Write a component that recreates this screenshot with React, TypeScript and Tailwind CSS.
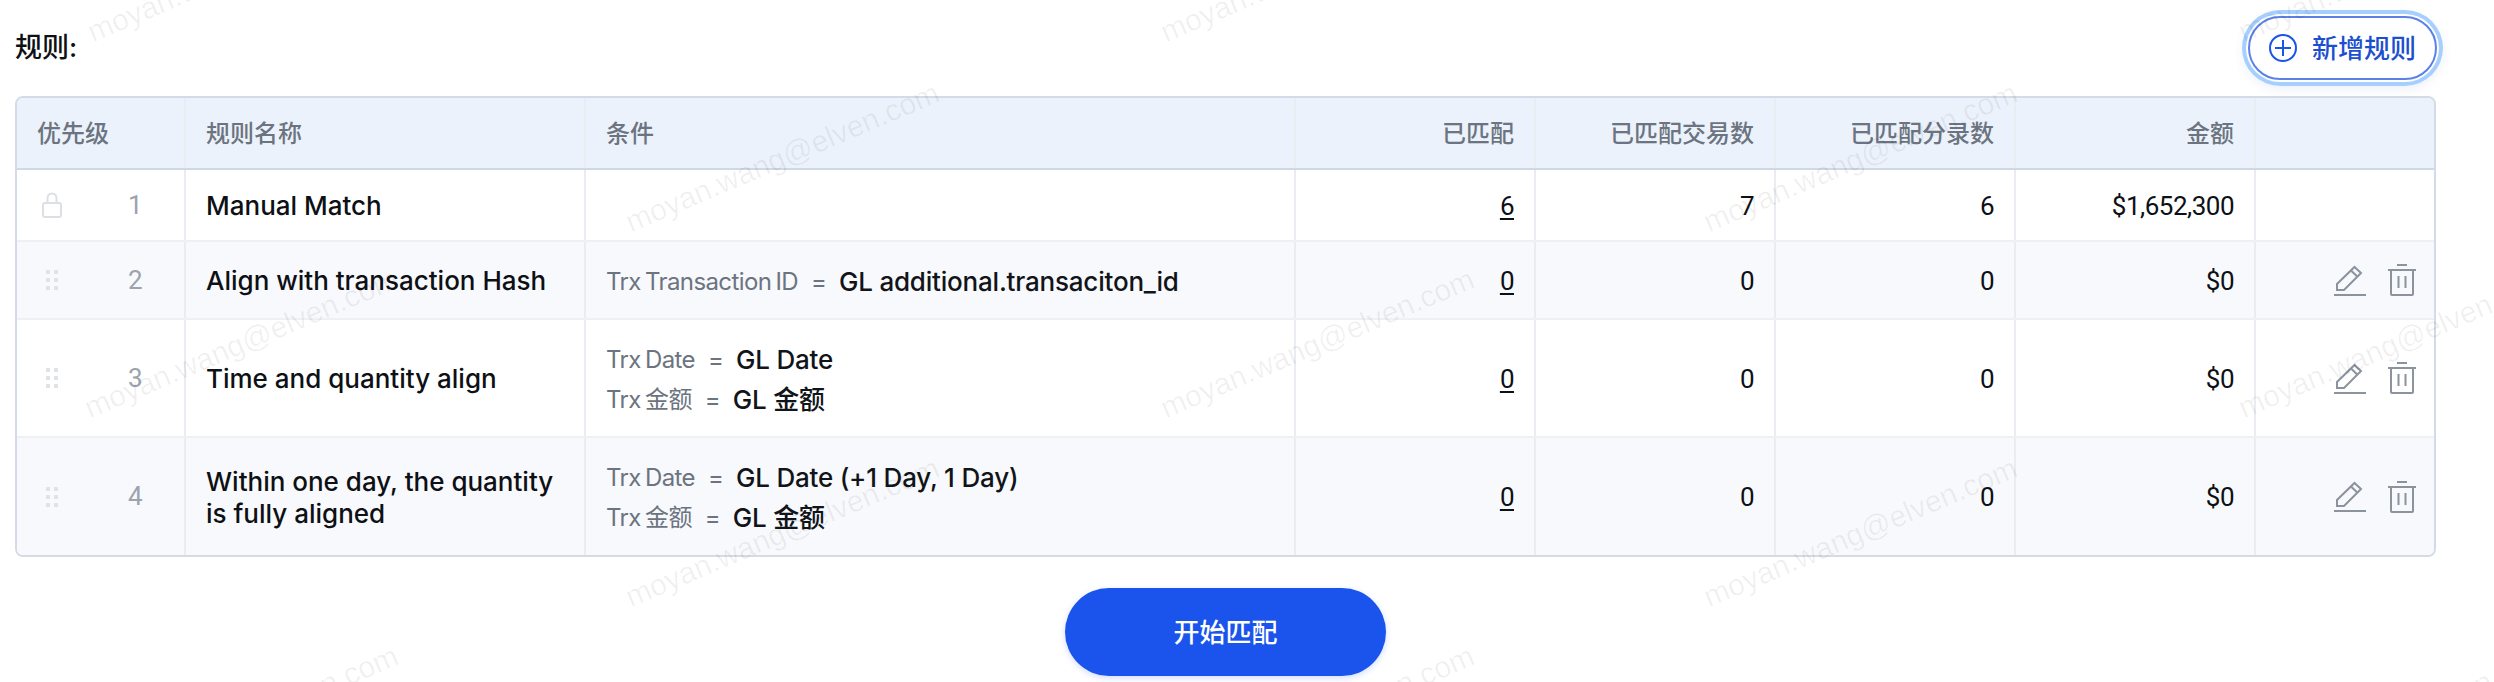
const rowGrid = "grid grid-cols-[169px_400px_710px_240px_240px_240px_240px_1fr]";
const cellLine = "border-r-2 border-[#e9ecf1] last:border-r-0";
const watermarks = [
  [87, 37], [1160, 37], [2238, 37],
  [625, 227], [1703, 227],
  [84, 413], [1160, 413], [2238, 413],
  [625, 602], [1703, 602],
  [84, 790], [1160, 790], [2238, 790],
];

function LockIcon() {
  return (
    <svg width="20" height="26" viewBox="0 0 20 26" fill="none" stroke="#dcdfe4" strokeWidth="2">
      <rect x="1" y="11" width="18" height="14" rx="2" />
      <path d="M5.500 11V6a4.500 4.500 0 0 1 9 0v5" />
    </svg>
  );
}

function DragIcon() {
  return (
    <svg width="12" height="20" viewBox="0 0 12 20" fill="#dfe2e7">
      <rect x="0" y="0" width="4" height="4" rx="0.5" />
      <rect x="8" y="0" width="4" height="4" rx="0.5" />
      <rect x="0" y="8" width="4" height="4" rx="0.5" />
      <rect x="8" y="8" width="4" height="4" rx="0.5" />
      <rect x="0" y="16" width="4" height="4" rx="0.5" />
      <rect x="8" y="16" width="4" height="4" rx="0.5" />
    </svg>
  );
}

function PencilIcon() {
  return (
    <svg width="32" height="31" viewBox="0 0 32 31" fill="none" stroke="#8a939e" strokeWidth="2">
      <path d="M3 25v-6L20.500 2 27 8 10 25z" />
      <path d="M17 5.500l6.500 6.300" />
      <path d="M0 30h32" />
    </svg>
  );
}

function TrashIcon() {
  return (
    <svg width="28" height="32" viewBox="0 0 28 32" fill="none" stroke="#8a939e" strokeWidth="2">
      <path d="M9 1h10" />
      <path d="M0 6h28" />
      <path d="M3 6v24a1 1 0 0 0 1 1h20a1 1 0 0 0 1-1V6" />
      <path d="M10.500 12v12M17.500 12v12" />
    </svg>
  );
}

function Condition({ label, value }: { label: string; value: string }) {
  return (
    <div className="flex items-center">
      <span className="text-[24px] font-normal tracking-[-0.6px] [word-spacing:-2px] text-[#6b7480]">{label}</span>
      <span className="ml-[13px] mr-[12px] text-[24px] font-normal text-[#6b7480]">=</span>
      <span className="text-[26px] font-medium tracking-[-0.2px] text-[#111418]">{value}</span>
    </div>
  );
}

function Num({ children, link }: { children: string; link?: boolean }) {
  return (
    <div className={`flex items-center justify-end border-r-2 border-[#e9ecf1] pr-5 pt-[2px] [font-family:Roboto,sans-serif] text-[26px] tracking-[-0.5px] text-[#0d1014] ${link ? "underline underline-offset-[3px]" : ""}`}>
      <span>{children}</span>
    </div>
  );
}

function Row({
  n,
  name,
  conds,
  counts,
  amount,
  rowClass,
  locked,
}: {
  n: string;
  name: React.ReactNode;
  conds?: { label: string; value: string }[];
  counts: string[];
  amount: string;
  rowClass: string;
  locked?: boolean;
}) {
  return (
    <div className={`${rowGrid} ${rowClass}`}>
      <div className={`flex items-center ${cellLine}`}>
        <div className="flex w-[68px] justify-center pl-[2px]">{locked ? <LockIcon /> : <DragIcon />}</div>
        <span className="ml-[32px] w-[36px] text-center [font-family:Roboto,sans-serif] text-[26px] tracking-[-0.5px] text-[#9ba3ae]">{n}</span>
      </div>
      <div className={`flex items-center px-5 pt-[2px] text-[26px] font-medium leading-[32px] text-[#0d1014] ${cellLine}`}>{name}</div>
      <div className={`flex flex-col justify-center gap-[7px] px-5 pt-[2px] leading-[33px] ${cellLine}`}>
        {conds?.map((c) => <Condition key={c.label} label={c.label} value={c.value} />)}
      </div>
      <Num link>{counts[0]}</Num>
      <Num>{counts[1]}</Num>
      <Num>{counts[2]}</Num>
      <Num>{amount}</Num>
      <div className="flex items-center justify-end gap-[22px] pr-[18px]">
        {!locked && (
          <>
            <PencilIcon />
            <TrashIcon />
          </>
        )}
      </div>
    </div>
  );
}

export default function App() {
  const headers = ["已匹配", "已匹配交易数", "已匹配分录数", "金额"];

  return (
    <div className="relative h-[682px] w-full overflow-hidden bg-white pl-[15px] pt-4 [font-family:Inter,'Noto_Sans_CJK_SC',sans-serif]">
      <div className="w-[2421px]">
        <div className="flex h-[64px] items-center justify-between">
          <span className="text-[27px] font-medium text-[#0d1014]">规则:</span>
          <button className="-mr-px flex h-[64px] w-[189px] items-center justify-center gap-[15px] rounded-full border-2 border-[#5b80e8] bg-white text-[26px] font-medium text-[#1c4fd0] shadow-[0_0_0_2px_#fff,0_0_0_6px_#a6cffd,0_4px_10px_6px_rgba(120,150,220,0.12)]">
            <svg width="28" height="28" viewBox="0 0 28 28" fill="none" stroke="#1a54ec" strokeWidth="2">
              <circle cx="14" cy="14" r="13" />
              <path d="M14 6v16M6 14h16" />
            </svg>
            新增规则
          </button>
        </div>

        <div className="mt-4 overflow-hidden rounded-[8px] border-2 border-[#d3dbe8]">
          <div className={`${rowGrid} h-[72px] border-b-2 border-[#cfd8e4] bg-[#ecf2fb] text-[24px] font-medium text-[#6b7480]`}>
            <div className={`flex items-center px-5 pt-[2px] ${cellLine}`}>优先级</div>
            <div className={`flex items-center px-5 pt-[2px] ${cellLine}`}>规则名称</div>
            <div className={`flex items-center px-5 pt-[2px] ${cellLine}`}>条件</div>
            {headers.map((h) => (
              <div key={h} className={`flex items-center justify-end pr-5 pt-[2px] ${cellLine}`}>{h}</div>
            ))}
            <div />
          </div>

          <Row
            n="1"
            name="Manual Match"
            counts={["6", "7", "6"]}
            amount="$1,652,300"
            rowClass="h-[72px] border-b-2 border-[#eef0f4] bg-white"
            locked
          />
          <Row
            n="2"
            name="Align with transaction Hash"
            conds={[{ label: "Trx Transaction ID", value: "GL additional.transaciton_id" }]}
            counts={["0", "0", "0"]}
            amount="$0"
            rowClass="h-[78px] border-b-2 border-[#eef0f4] bg-[#f8f9fc]"
          />
          <Row
            n="3"
            name="Time and quantity align"
            conds={[
              { label: "Trx Date", value: "GL Date" },
              { label: "Trx 金额", value: "GL 金额" },
            ]}
            counts={["0", "0", "0"]}
            amount="$0"
            rowClass="h-[118px] border-b-2 border-[#eef0f4] bg-white"
          />
          <Row
            n="4"
            name={<span>Within one day, the quantity<br />is fully aligned</span>}
            conds={[
              { label: "Trx Date", value: "GL Date (+1 Day, 1 Day)" },
              { label: "Trx 金额", value: "GL 金额" },
            ]}
            counts={["0", "0", "0"]}
            amount="$0"
            rowClass="h-[117px] bg-[#f8f9fc]"
          />
        </div>

        <button className="mx-auto mt-[31px] flex h-[88px] w-[321px] items-center justify-center rounded-full bg-[#1a54ec] text-[26px] font-medium text-white shadow-[0_2px_6px_rgba(26,84,236,0.2)]">
          开始匹配
        </button>
      </div>

      {/* watermark tiles over the page */}
      <div className="pointer-events-none absolute inset-0">
        {watermarks.map(([x, y]) => (
          <span
            key={`${x}-${y}`}
            className="absolute origin-bottom-left -rotate-[23deg] whitespace-nowrap [font-family:'Liberation_Sans',sans-serif] text-[30px] leading-none text-black/[0.06]"
            style={{ left: x + 8, top: y - 20 }}
          >
            moyan.wang@elven.com
          </span>
        ))}
      </div>
    </div>
  );
}
